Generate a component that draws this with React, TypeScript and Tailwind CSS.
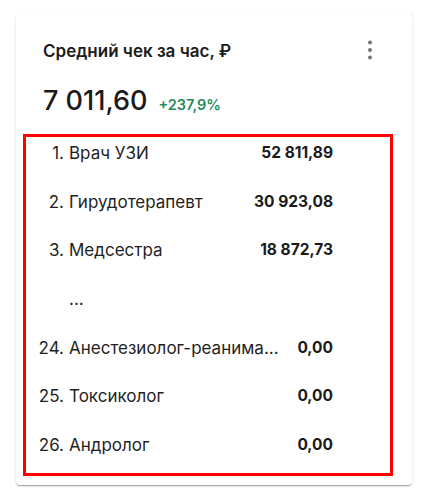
import React from "react";

const rows: { n: string; name: string; value: string }[] = [
  { n: "1.", name: "Врач УЗИ", value: "52 811,89" },
  { n: "2.", name: "Гирудотерапевт", value: "30 923,08" },
  { n: "3.", name: "Медсестра", value: "18 872,73" },
  { n: "", name: "...", value: "" },
  { n: "24.", name: "Анестезиолог-реанима...", value: "0,00" },
  { n: "25.", name: "Токсиколог", value: "0,00" },
  { n: "26.", name: "Андролог", value: "0,00" },
];

export default function App() {
  return (
    <div className="min-h-[500px] w-[430px] bg-white pl-4 pt-3" style={{ fontFamily: "Inter, 'Noto Sans', sans-serif" }}>
      <div className="flex h-[473px] w-[396px] flex-col rounded-[4px] bg-white shadow-[0_2px_1px_-1px_rgba(0,0,0,0.2),0_1px_1px_0_rgba(0,0,0,0.14),0_1px_3px_0_rgba(0,0,0,0.12)]">
        <div className="mt-[27px] flex h-[24px] items-center justify-between pl-[27px] pr-[38px]">
          <div className="text-[17px] font-semibold leading-[24px] text-[#1c1c1c]">Средний чек за час, ₽</div>
          <svg width="8" height="24" viewBox="0 0 8 24" className="mt-[-2px]">
            <circle cx="4" cy="4.5" r="2" fill="#757575" />
            <circle cx="4" cy="12" r="2" fill="#757575" />
            <circle cx="4" cy="19.5" r="2" fill="#757575" />
          </svg>
        </div>
        <div className="mt-[21px] flex items-baseline pl-[27px]">
          <span className="text-[27px] font-medium leading-[34px] text-[#1a1a1a]">7 011,60</span>
          <span className="ml-[11px] text-[14.5px] font-semibold text-[#1f8a5e]">+237,9%</span>
        </div>
        <div className="ml-[7px] mt-[16px] flex h-[342px] w-[370px] flex-col gap-[24.7px] border-[3px] border-[#ff0000] pb-4 pt-[4px]">
          {rows.map((r, i) => (
            <div key={i} className="flex h-[24px] items-center text-[17px] leading-[24px] text-[#1f1f1f]">
              <span className="w-[38px] shrink-0 text-right">{r.n}</span>
              <span className="ml-[5px] min-w-0 flex-1 whitespace-nowrap pr-[8px]">{r.name}</span>
              <span className="mr-[57px] shrink-0 text-[15.5px] font-bold text-[#1a1a1a]">{r.value}</span>
            </div>
          ))}
        </div>
      </div>
    </div>
  );
}
